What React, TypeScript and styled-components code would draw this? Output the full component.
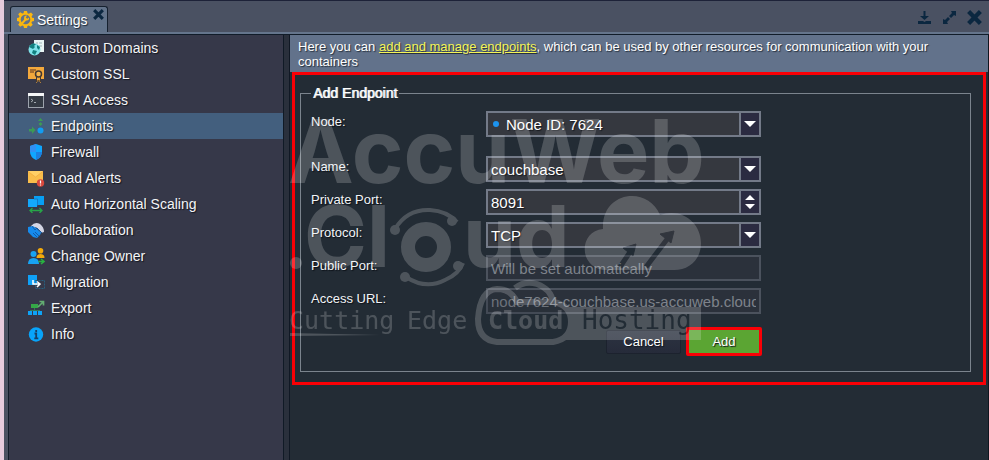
import React from "react";
import styled, { createGlobalStyle, css } from "styled-components";

const sans = '"Liberation Sans", Arial, sans-serif';

const GlobalStyle = createGlobalStyle`
  *, *::before, *::after { box-sizing: border-box; }
  html, body, #root { height: 100%; }
  body {
    margin: 0;
    overflow: hidden;
    background: #1c2530;
    font-family: ${sans};
    color: #f2f4f7;
  }
`;

const Window = styled.div`
  display: flex;
  flex-direction: column;
  min-height: 100vh;
  border-left: 4px solid #e6cbdc;
  background: #4a5161;
`;

const TitleBar = styled.header`
  display: flex;
  align-items: flex-end;
  height: 34px;
  padding-left: 6px;
  border-top: 1px solid #1d2238;
  border-bottom: 2px solid #65758c;
  background: #4a5162;
`;

const Tab = styled.div`
  display: flex;
  align-items: center;
  gap: 3px;
  height: 26px;
  padding: 0 3px 0 6px;
  border: 1px solid #16212f;
  border-bottom: 0;
  border-radius: 3px 3px 0 0;
  background: #62738a;
`;

const TabTitle = styled.h1`
  margin: 0 2px 0 0;
  font-size: 14px;
  line-height: 18px;
  font-weight: 400;
  color: #fff;
  text-shadow: 1px 1px 1px #1c2936;
`;

const IconButton = styled.button`
  display: flex;
  padding: 0;
  border: 0;
  background: none;
  color: #0b2740;
  cursor: pointer;
`;

const TabClose = styled(IconButton)`
  align-self: flex-start;
  margin-top: 2px;
`;

const WindowTools = styled.div`
  display: flex;
  align-items: center;
  gap: 10px;
  height: 30px;
  margin-left: auto;
  padding-right: 7px;
`;

const Body = styled.div`
  display: flex;
  flex: 1;
  margin-left: 4px;
  border-top: 1px solid #111c29;
  border-left: 1px solid #111c29;
  background: #232c35;
`;

const Sidebar = styled.nav`
  flex: none;
  width: 275px;
  border-right: 1px solid #101a26;
  background: #363849;
`;

const NavItem = styled.a<{ $active?: boolean }>`
  display: flex;
  align-items: center;
  gap: 6px;
  height: 26px;
  padding-left: 19px;
  font-size: 14px;
  line-height: 18px;
  color: #f4f5f7;
  text-decoration: none;
  text-shadow: 1px 1px 1px #14171f;
  ${(p) => p.$active && css`background: #435f7e;`}
`;

const Splitter = styled.div`
  flex: none;
  width: 6px;
  border-right: 1px solid #101824;
  background: #2a303c;
`;

const Content = styled.main`
  position: relative;
  flex: 1;
  min-width: 0;
  border-right: 1px solid #10161f;
`;

const Hint = styled.p`
  margin: 0;
  padding: 4px 8px 3px;
  font-size: 13px;
  line-height: 15px;
  color: #fff;
  background: #62728b;
  text-shadow: 1px 1px 1px #26303d;

  a { color: #f5f557; }
`;

const Highlight = styled.section`
  margin: 0 2px 0 2px;
  padding: 9px 12px 10px 5px;
  border: 3px solid #fa0006;
`;

const Fieldset = styled.fieldset`
  margin: 0;
  padding: 9px 10px 15px;
  border: 1px solid #7b848d;
  min-width: 0;
`;

const Legend = styled.legend`
  padding: 0 2px;
  font-size: 14px;
  line-height: 18px;
  color: #fff;
  text-shadow: 1px 0 0 #dfe2e5;
`;

const Row = styled.div<{ $spaced?: boolean }>`
  display: flex;
  align-items: flex-start;
  width: 450px;
  max-width: 100%;
  margin-bottom: ${(p) => (p.$spaced ? 19 : 7)}px;
`;

const Label = styled.label`
  flex: none;
  width: 175px;
  padding-top: 3px;
  font-size: 13px;
  line-height: 16px;
  text-shadow: 1px 1px 1px #0c1118;
`;

const Field = styled.div<{ $disabled?: boolean }>`
  display: grid;
  flex: 1;
  min-width: 0;
  height: 26px;
  border: 2px solid ${(p) => (p.$disabled ? "#4b525d" : "#737a88")};
  background: ${(p) => (p.$disabled ? "#2b313b" : "#35383f")};

  > * { grid-area: 1 / 1; }
`;

const control = css`
  width: 100%;
  min-width: 0;
  height: 22px;
  padding: 1px 3px 0;
  border: 0;
  border-radius: 0;
  outline: 0;
  background: transparent;
  color: #fff;
  font: 15px ${sans};
  text-shadow: 1px 1px 1px #16191f;
`;

const Input = styled.input`
  ${control}
  &:disabled, &::placeholder { color: #7e838b; opacity: 1; text-shadow: none; }
`;

const Select = styled.select<{ $marked?: boolean }>`
  ${control}
  appearance: none;
  padding-left: ${(p) => (p.$marked ? 18 : 3)}px;
  option { color: #fff; background: #35383f; }
`;

const NodeDot = styled.span`
  align-self: center;
  width: 6px;
  height: 6px;
  margin-left: 5px;
  border-radius: 50%;
  background: #1c93ee;
  pointer-events: none;
`;

const Trigger = styled.span`
  display: flex;
  align-items: center;
  justify-content: center;
  justify-self: end;
  width: 20px;
  border-left: 2px solid #737a88;
  background: #2b2b41;
  color: #fff;
  pointer-events: none;
`;

const Actions = styled.div`
  display: flex;
  justify-content: flex-end;
  align-items: center;
  gap: 5px;
  width: 451px;
  max-width: 100%;
  margin-top: 13px;
`;

const Button = styled.button<{ $primary?: boolean }>`
  width: ${(p) => (p.$primary ? 76 : 75)}px;
  height: ${(p) => (p.$primary ? 29 : 24)}px;
  padding: 0;
  border: ${(p) => (p.$primary ? "3px solid #fa0006" : "1px solid #1c222e")};
  border-radius: 2px;
  background: ${(p) => (p.$primary ? "#5ba533" : "linear-gradient(#2c3341, #262b3a)")};
  color: #fff;
  font: 13px ${sans};
  text-shadow: 1px 1px 1px #10151d;
  cursor: pointer;
`;

const Watermark = styled.svg`
  position: absolute;
  top: 75px;
  left: -5px;
  width: 425px;
  height: 240px;
  opacity: 0.19;
  overflow: visible;
  pointer-events: none;
`;

const Icon = ({ children }: { children: React.ReactNode }) => (
  <svg width="17" height="17" viewBox="0 0 17 17" fill="none" aria-hidden="true">
    {children}
  </svg>
);

const DomainsIcon = () => (
  <Icon>
    <path d="M6 0h10v12h-5L6 6z" fill="#e9f4f4" />
    <path d="M8 3h2m1 0h3M11 6h3" stroke="#9db4b8" />
    <circle cx="6.5" cy="9.5" r="6" fill="#7fe3ea" />
    <path d="M1 7c2-4 5-4 7-3L6 6l1 1-2 2-2-1zM5 10l4 1-2 4-3-2zM9 5l3 2-1 3-2-2z" fill="#11807f" />
  </Icon>
);
const SslIcon = () => (
  <Icon>
    <path d="M0 1h16v12H0z" fill="#f3a83c" />
    <path d="M2 4h6M2 6h4" stroke="#8f5a28" strokeWidth="1.3" />
    <path d="M8 9v8l2.500-2L13 17V9z" fill="#f3a83c" />
    <circle cx="10.500" cy="8" r="3" fill="#f8b54c" stroke="#443932" strokeWidth="1.500" />
    <path d="M8.500 11v5l2-2 2 2v-5" stroke="#443932" />
  </Icon>
);
const SshIcon = () => (
  <Icon>
    <rect x=".5" y="1.500" width="15" height="14" fill="#343a44" stroke="#9da3ad" />
    <path d="M0 1h16v3H0z" fill="#f4f5f7" />
    <path d="M3 7l2 1.500L3 10M6 10.500h2" stroke="#bfc5cb" strokeWidth=".8" />
  </Icon>
);
const EndpointsIcon = () => (
  <Icon>
    <path d="M12.500 0l2.500 3h-5zM12.500 4l2 2-2 2-2-2zM7.500 12L4 8.500V11H1v2.500h3V16z" fill="#3d9a55" />
    <circle cx="12.500" cy="12.500" r="3" fill="#129df2" />
  </Icon>
);
const FirewallIcon = () => (
  <Icon>
    <path d="M8 0l6 2v6q0 5-6 8-6-3-6-8V2z" fill="#0fa6ff" />
    <path d="M8 0v8H2V2z" fill="#3190f3" />
    <path d="M8 8h6q0 5-6 8z" fill="#1c7fe0" />
  </Icon>
);
const AlertsIcon = () => (
  <Icon>
    <path d="M0 1h15v12H0z" fill="#f9bd4b" />
    <path d="M0 1l7.500 6L15 1z" fill="#ffcf66" />
    <path d="M0 1.500l7.500 5.500L15 1.500" stroke="#efaa3e" strokeWidth=".7" />
    <circle cx="12.500" cy="13" r="3.700" fill="#d8483d" />
    <path d="M12.500 10.500v3M12.500 14.500v1" stroke="#fff" strokeWidth="1.200" />
  </Icon>
);
const ScalingIcon = () => (
  <Icon>
    <path d="M6 0h10v9H6z" fill="#079ff4" />
    <path d="M0 3h9v8H0z" fill="#13a8fb" />
    <path d="M6 3h3.500v6.500" stroke="#1672bd" strokeWidth=".8" />
    <path d="M2 14.500h12M4.500 12L2 14.500 4.500 17M11.500 12l2.500 2.500-2.500 2.500" stroke="#27a548" strokeWidth="1.300" />
  </Icon>
);
const CollaborationIcon = () => (
  <Icon>
    <path d="M3 4q4-5 9-2 4 3 4 8l-3 1-5-6-3 2z" fill="#d4d5e4" />
    <path d="M0 5l5-1 3 2 5 5-1 2-3 3-4-1-5-5z" fill="#168bed" />
    <path d="M4 4l3 4 2-2 5 5M7 10l4 4M5 11l4 4" stroke="#145ba8" />
  </Icon>
);
const OwnerIcon = () => (
  <Icon>
    <circle cx="12.500" cy="2.800" r="2.800" fill="#f4aa0a" />
    <path d="M8.500 10q0-4 4-4t4 4z" fill="#f4aa0a" />
    <circle cx="5.500" cy="6" r="3" fill="#18a3f2" />
    <path d="M0 16q0-6 5.500-6t5.500 6z" fill="#18a3f2" />
    <path d="M10.500 13.500h5M13 11l3 2.500-3 2.500" stroke="#28b340" strokeWidth="1.500" />
  </Icon>
);
const MigrationIcon = () => (
  <Icon>
    <path d="M0 1h9v10H0z" fill="#0fa1f7" />
    <rect x="7.500" y="6.500" width="9" height="8" stroke="#286080" strokeDasharray="2 1" />
    <path d="M5 6v4h6M9 7.500l3 2.500-3 3" stroke="#fff" strokeWidth="1.500" />
  </Icon>
);
const ExportIcon = () => (
  <Icon>
    <path d="M3 4h7v4H3z" fill="#35a747" />
    <path d="M6.500 8v3M2 10.500h10" stroke="#33775a" />
    <path d="M0 11h4v4H0zM5 11h4v4H5zM10 11h4v4h-4z" fill="#0ea3f6" />
    <path d="M10 7l5-5M11.500 1.500h4v4" stroke="#63ae72" strokeWidth="1.700" />
  </Icon>
);
const InfoIcon = () => (
  <Icon>
    <circle cx="8" cy="8.500" r="7.200" fill="#08a4fa" />
    <path d="M8.200 4v2M6.500 7.500h1.700V12M6.300 12.300h4" stroke="#173e65" strokeWidth="1.800" />
  </Icon>
);
const GearIcon = () => (
  <Icon>
    <path
      d="M7 0h3l.5 2.300 1.300.5L14 1.600 15.900 3.500l-1.300 2 .5 1.300L17 7v3l-2 .5-.6 1.300 1.300 2-2 2-2-1.300-1.300.5L10 17H7l-.5-2-1.300-.6-2 1.300-2-2 1.300-2L2 10.500 0 10V7l2-.4.500-1.300-1.300-2 2-2 2 1.300 1.300-.4z"
      fill="#fbb70f"
    />
    <circle cx="8.500" cy="8.500" r="4.800" fill="#62738a" />
    <path d="M4 13.500L9 8" stroke="#fbb70f" strokeWidth="2" />
    <path d="M12 6.500a2.500 2.500 0 1 1-2-2l-1.200 2 1.500 1.200z" fill="#fbb70f" />
  </Icon>
);

const CrossIcon = ({ size, weight }: { size: number; weight: number }) => (
  <svg width={size} height={size} viewBox="0 0 14 14" aria-hidden="true">
    <path d="M1.500 1.500l11 11M12.500 1.500l-11 11" stroke="currentColor" strokeWidth={weight} />
  </svg>
);
const DownloadIcon = () => (
  <svg width="15" height="15" viewBox="0 0 15 15" fill="currentColor" aria-hidden="true">
    <path d="M6.500 1h2v5H12L7.500 10 3 6h3.500zM1 11h5l1.500 1L9 11h5v3H1z" />
  </svg>
);
const ExpandIcon = () => (
  <svg width="15" height="15" viewBox="0 0 15 15" fill="currentColor" aria-hidden="true">
    <path d="M9 1h5v5l-2-1-3 3-2-2 3-3zM1 9l2 1 3-3 2 2-3 3 1 2H1z" />
  </svg>
);
const DownArrow = () => (
  <svg width="12" height="6" viewBox="0 0 12 6" aria-hidden="true">
    <path d="M0 0h12L6 6z" fill="currentColor" />
  </svg>
);
const SpinArrows = () => (
  <svg width="10" height="14" viewBox="0 0 10 14" aria-hidden="true">
    <path d="M5 0l5 5H0zM0 9h10l-5 5z" fill="currentColor" />
  </svg>
);

const nav = [
  { label: "Custom Domains", Glyph: DomainsIcon },
  { label: "Custom SSL", Glyph: SslIcon },
  { label: "SSH Access", Glyph: SshIcon },
  { label: "Endpoints", Glyph: EndpointsIcon, active: true },
  { label: "Firewall", Glyph: FirewallIcon },
  { label: "Load Alerts", Glyph: AlertsIcon },
  { label: "Auto Horizontal Scaling", Glyph: ScalingIcon },
  { label: "Collaboration", Glyph: CollaborationIcon },
  { label: "Change Owner", Glyph: OwnerIcon },
  { label: "Migration", Glyph: MigrationIcon },
  { label: "Export", Glyph: ExportIcon },
  { label: "Info", Glyph: InfoIcon },
];

const Brand = () => (
  <Watermark viewBox="0 0 425 240" fill="#fff" aria-hidden="true">
    <g fontFamily="Inter, sans-serif" fontWeight="700">
      <text x="3" y="73" fontSize="88">AccuWeb</text>
      <text x="19" y="157" fontSize="85">Cl</text>
      <text x="178" y="157" fontSize="85">ud</text>
    </g>
    <circle cx="11" cy="153" r="6" />
    <circle cx="141" cy="137" r="18" fill="none" stroke="#fff" strokeWidth="14" />
    <path
      d="M110 119q12-20 35-19 17 1 27 12M121 167q20 13 39 3 14-6 18-17"
      fill="none"
      stroke="#fff"
      strokeWidth="4"
    />
    <circle cx="110" cy="120" r="5" />
    <circle cx="167" cy="111" r="5" />
    <circle cx="120" cy="167" r="5" />
    <circle cx="173" cy="156" r="5" />
    <path d="M322 160c-29 0-29-39-4-41-2-38 45-44 57-14 22-8 41 8 41 28 0 17-12 27-27 27z" />
    <g stroke="#222c35" fill="#222c35">
      <path d="M335 157l12-18M361 157l22-29" strokeWidth="5" />
      <path d="M351 134l-13 4 10 8zM389 121l-14 3 11 9z" />
    </g>
    <path d="M278 197h138v33H278z" />
    <path
      d="M212 232q-19-2-19-23 2-29 19-30 14 0 20 13h36q18 3 18 20 0 17-18 20z"
      fill="#222c35"
      stroke="#fff"
      strokeWidth="6"
    />
    <path d="M230 178q10-8 22-4 14 5 16 18" fill="none" stroke="#fff" strokeWidth="6" />
    <path d="M5 223l90 2-90 1z" />
    <g fontFamily="'DejaVu Sans Mono', monospace" fontSize="25">
      <text x="4" y="219">Cutting</text>
      <text x="122" y="219">Edge</text>
      <text x="203" y="219" fontWeight="700">Cloud</text>
      <text x="297" y="219" fontSize="26" fill="#222c35">Hosting</text>
    </g>
  </Watermark>
);

export default function App() {
  return (
    <>
      <GlobalStyle />
      <Window>
        <TitleBar>
          <Tab>
            <GearIcon />
            <TabTitle>Settings</TabTitle>
            <TabClose aria-label="Close tab"><CrossIcon size={11} weight={4} /></TabClose>
          </Tab>
          <WindowTools>
            <IconButton aria-label="Minimize"><DownloadIcon /></IconButton>
            <IconButton aria-label="Expand"><ExpandIcon /></IconButton>
            <IconButton aria-label="Close"><CrossIcon size={15} weight={4} /></IconButton>
          </WindowTools>
        </TitleBar>
        <Body>
          <Sidebar>
            {nav.map(({ label, Glyph, active }) => (
              <NavItem key={label} href="#" $active={active}>
                <Glyph />
                {label}
              </NavItem>
            ))}
          </Sidebar>
          <Splitter />
          <Content>
            <Hint>
              Here you can <a href="#">add and manage endpoints</a>, which can be used by other
              resources for communication with your containers
            </Hint>
            <Highlight>
              <Fieldset>
                <Legend>Add Endpoint</Legend>
                <Row $spaced>
                  <Label htmlFor="node">Node:</Label>
                  <Field>
                    <Select id="node" $marked><option>Node ID: 7624</option></Select>
                    <NodeDot />
                    <Trigger><DownArrow /></Trigger>
                  </Field>
                </Row>
                <Row>
                  <Label htmlFor="name">Name:</Label>
                  <Field>
                    <Select id="name"><option>couchbase</option></Select>
                    <Trigger><DownArrow /></Trigger>
                  </Field>
                </Row>
                <Row>
                  <Label htmlFor="port">Private Port:</Label>
                  <Field>
                    <Input id="port" defaultValue="8091" />
                    <Trigger><SpinArrows /></Trigger>
                  </Field>
                </Row>
                <Row>
                  <Label htmlFor="protocol">Protocol:</Label>
                  <Field>
                    <Select id="protocol"><option>TCP</option></Select>
                    <Trigger><DownArrow /></Trigger>
                  </Field>
                </Row>
                <Row>
                  <Label htmlFor="public">Public Port:</Label>
                  <Field $disabled>
                    <Input id="public" disabled placeholder="Will be set automatically" />
                  </Field>
                </Row>
                <Row>
                  <Label htmlFor="url">Access URL:</Label>
                  <Field $disabled>
                    <Input id="url" disabled defaultValue="node7624-couchbase.us-accuweb.cloud" />
                  </Field>
                </Row>
                <Actions>
                  <Button type="button">Cancel</Button>
                  <Button type="button" $primary>Add</Button>
                </Actions>
              </Fieldset>
            </Highlight>
            <Brand />
          </Content>
        </Body>
      </Window>
    </>
  );
}
